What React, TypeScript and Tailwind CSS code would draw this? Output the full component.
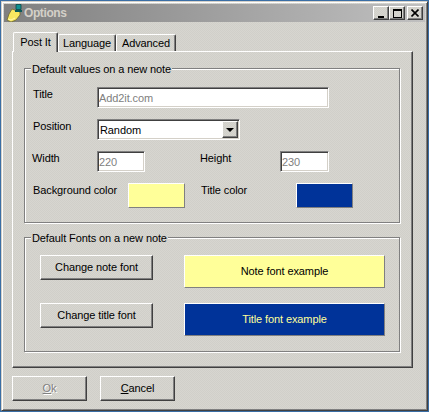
const face = "bg-[repeating-conic-gradient(#d7d6d0_0_25%,#d0cfc9_0_50%)] bg-[length:2px_2px]"

function Raised({ className, children }: { className: string; children?: React.ReactNode }) {
  return (
    <div className={`flex items-center justify-center border border-t-white border-l-white border-r-[#404040] border-b-[#404040] shadow-[inset_-1px_-1px_0_#808080] ${face} ${className}`}>
      {children}
    </div>
  )
}

function Field({ value, className }: { value: string; className: string }) {
  return (
    <div className={`flex items-center border border-t-[#808080] border-l-[#808080] border-r-white border-b-white bg-white pl-[1px] shadow-[inset_1px_1px_0_#404040,inset_-1px_-1px_0_#d4d0c8] text-[#808080] ${className}`}>
      {value}
    </div>
  )
}

function Swatch({ className, children }: { className: string; children?: React.ReactNode }) {
  return (
    <div className={`flex items-center justify-center border border-t-white border-l-white border-r-[#808080] border-b-[#808080] ${className}`}>
      {children}
    </div>
  )
}

function Group({ title, className, children }: { title: string; className: string; children: React.ReactNode }) {
  return (
    <div className={`relative w-[376px] border border-[#808080] shadow-[inset_1px_1px_0_#fff,1px_1px_0_#fff] ${className}`}>
      <span className={`absolute left-[6px] top-[-6px] px-[1px] leading-[13px] ${face}`}>{title}</span>
      {children}
    </div>
  )
}

function NoteIcon() {
  return (
    <svg width="18" height="18" viewBox="0 0 18 18" className="shrink-0">
      <path d="M6 5 L14 8 L14 11 L10 16 L5 18 L1 16 L3 10 Z" fill="#f8e860" stroke="#6e6a30" strokeWidth="0.8" />
      <path d="M2 15 L5 16 L9 14" fill="none" stroke="#fff8b0" strokeWidth="1" />
      <path d="M10 0.5 h5 v5 h-5 Z" fill="#0f9090" stroke="#064848" strokeWidth="0.8" />
      <path d="M9 6 h7 v2 h-7 Z" fill="#0a5a5a" />
    </svg>
  )
}

export default function App() {
  return (
    <div className="h-[412px] w-[429px] overflow-hidden bg-[#3a6ea5] p-[1px] font-['Liberation_Sans',Arial,sans-serif] text-[11px] tracking-[-0.1px] text-black">
      <div className={`flex h-full flex-col border border-t-[#d4d0c8] border-l-[#d4d0c8] border-r-[#404040] border-b-[#404040] p-[2px] shadow-[inset_1px_1px_0_#fff,inset_-1px_-1px_0_#808080] ${face}`}>
        {/* title bar */}
        <div className="flex h-[18px] shrink-0 items-center bg-linear-to-r from-[#808080] to-[#c0c0c0] pl-[2px] pr-[2px]">
          <NoteIcon />
          <span className="text-[12px] font-bold tracking-[-0.4px] text-[#d4d0c8]">Options</span>
          <div className="ml-auto flex">
            <Raised className="h-[14px] w-[16px]">
              <span className="mt-[7px] mr-[1px] h-[2px] w-[6px] bg-black" />
            </Raised>
            <Raised className="h-[14px] w-[16px]">
              <span className="h-[9px] w-[9px] border border-t-2 border-black" />
            </Raised>
            <Raised className="ml-[2px] h-[14px] w-[16px]">
              <svg width="8" height="8" viewBox="0 0 8 8">
                <path d="M0.5 0.5 L7.5 7.5 M7.5 0.5 L0.5 7.5" stroke="#000" strokeWidth="1.6" />
              </svg>
            </Raised>
          </div>
        </div>

        {/* tabs */}
        <div className="ml-[9px] mt-[10px] flex h-[19px] items-end">
          <div className={`relative z-10 mb-[-1px] flex h-[20px] w-[45px] items-start justify-center rounded-t-[2px] border-t border-l border-r border-t-white border-l-white border-r-[#404040] pt-[1px] shadow-[inset_-1px_0_0_#808080] ${face}`}>
            Post It
          </div>
          <div className={`flex h-[17px] w-[58px] items-center justify-center rounded-t-[2px] border-t border-l border-r border-t-white border-l-white border-r-[#404040] shadow-[inset_-1px_0_0_#808080] ${face}`}>
            Language
          </div>
          <div className={`flex h-[17px] w-[60px] items-center justify-center rounded-t-[2px] border-t border-l border-r border-t-white border-l-white border-r-[#404040] shadow-[inset_-1px_0_0_#808080] ${face}`}>
            Advanced
          </div>
        </div>

        {/* tab page */}
        <div className="ml-[8px] flex h-[317px] w-[401px] flex-col border border-t-white border-l-white border-r-[#404040] border-b-[#404040] pl-[11px] pt-[16px] shadow-[inset_-1px_-1px_0_#808080]">
          <Group title="Default values on a new note" className="h-[155px]">
            <div className="flex flex-col gap-[11px] pl-[8px] pt-[18px] leading-[14px]">
              <div className="flex items-start">
                <span className="w-[64px]">Title</span>
                <Field value="Add2it.com" className="h-[21px] w-[232px]" />
              </div>
              <div className="flex items-start">
                <span className="w-[64px]">Position</span>
                <div className="flex h-[21px] w-[143px] items-center border border-t-[#808080] border-l-[#808080] border-r-white border-b-white bg-white p-[1px] shadow-[inset_1px_1px_0_#404040,inset_-1px_-1px_0_#d4d0c8]">
                  <span className="flex-1 pl-[1px]">Random</span>
                  <Raised className="h-[17px] w-[16px]">
                    <span className="h-0 w-0 border-x-[4px] border-t-[4px] border-x-transparent border-t-black" />
                  </Raised>
                </div>
              </div>
              <div className="flex items-start">
                <span className="ml-[-1px] w-[65px]">Width</span>
                <Field value="220" className="h-[21px] w-[48px]" />
                <span className="ml-[55px] w-[80px]">Height</span>
                <Field value="230" className="h-[21px] w-[49px]" />
              </div>
              <div className="flex items-start">
                <span className="w-[95px]">Background color</span>
                <Swatch className="h-[25px] w-[57px] bg-[#ffff99]" />
                <span className="ml-[16px] w-[95px]">Title color</span>
                <Swatch className="h-[25px] w-[57px] bg-[#003399]" />
              </div>
            </div>
          </Group>

          <Group title="Default Fonts on a new note" className="mt-[14px] h-[115px]">
            <div className="flex flex-col gap-[15px] pl-[15px] pt-[17px]">
              <div className="flex items-start gap-[31px]">
                <Raised className="h-[25px] w-[113px]">Change note font</Raised>
                <Swatch className="h-[33px] w-[201px] bg-[#ffff99]">Note font example</Swatch>
              </div>
              <div className="flex items-start gap-[31px]">
                <Raised className="h-[25px] w-[113px]">Change title font</Raised>
                <Swatch className="h-[33px] w-[201px] bg-[#003399] text-[#ffff99]">Title font example</Swatch>
              </div>
            </div>
          </Group>
        </div>

        {/* dialog buttons */}
        <div className="ml-[8px] mt-[8px] flex gap-[13px]">
          <Raised className="h-[25px] w-[75px] text-[#808080] [text-shadow:1px_1px_0_#fff]">
            <span><span className="underline">O</span>k</span>
          </Raised>
          <Raised className="h-[25px] w-[75px]">
            <span><span className="underline">C</span>ancel</span>
          </Raised>
        </div>
      </div>
    </div>
  )
}
